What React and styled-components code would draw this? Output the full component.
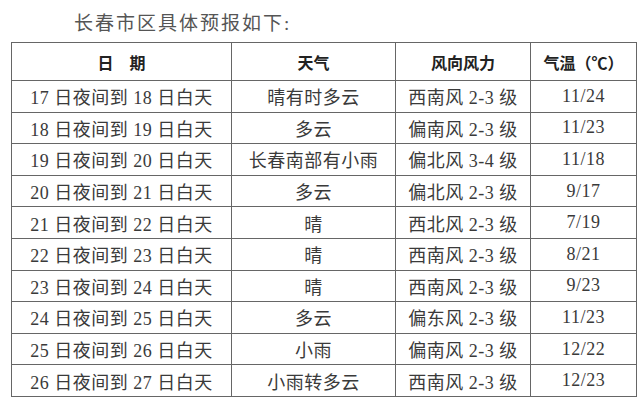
import React from "react";
import styled, { createGlobalStyle } from "styled-components";

const GlobalStyle = createGlobalStyle`
  html, body {
    margin: 0;
    padding: 0;
    background: #ffffff;
  }
  body {
    font-family: "Liberation Serif", "Noto Sans CJK SC", serif;
    color: #333;
  }
`;

const Page = styled.div`
  width: 640px;
  height: 404px;
  overflow: hidden;
  background: #fff;
`;

const Title = styled.div`
  height: 42px;
  padding-left: 74px;
  box-sizing: border-box;
  display: flex;
  align-items: center;
  font-size: 19px;
  letter-spacing: 2px;
  color: #555;
  font-family: "Liberation Serif", "Noto Sans CJK SC", serif;
`;

const Table = styled.table`
  margin-left: 11px;
  border-collapse: collapse;
  table-layout: fixed;
  width: 625px;
  border: 1.5px solid #666;
`;

const HeadCell = styled.th`
  height: 37px;
  padding: 0;
  border: 1px solid #666;
  font-size: 16px;
  font-weight: 700;
  color: #222;
  text-align: center;
  vertical-align: middle;
  font-family: "Noto Sans CJK SC", serif;
`;

const Cell = styled.td`
  height: 30.6px;
  padding: 0;
  border: 1px solid #666;
  font-size: 18px;
  letter-spacing: 0.5px;
  color: #3a3a3a;
  text-align: center;
  vertical-align: middle;
  white-space: nowrap;
`;

const columns = [
  { label: "日　期", width: 220 },
  { label: "天气", width: 164 },
  { label: "风向风力", width: 135 },
  { label: "气温（℃）", width: 106 },
];

const rows = [
  ["17 日夜间到 18 日白天", "晴有时多云", "西南风 2-3 级", "11/24"],
  ["18 日夜间到 19 日白天", "多云", "偏南风 2-3 级", "11/23"],
  ["19 日夜间到 20 日白天", "长春南部有小雨", "偏北风 3-4 级", "11/18"],
  ["20 日夜间到 21 日白天", "多云", "偏北风 2-3 级", "9/17"],
  ["21 日夜间到 22 日白天", "晴", "西北风 2-3 级", "7/19"],
  ["22 日夜间到 23 日白天", "晴", "西南风 2-3 级", "8/21"],
  ["23 日夜间到 24 日白天", "晴", "西南风 2-3 级", "9/23"],
  ["24 日夜间到 25 日白天", "多云", "偏东风 2-3 级", "11/23"],
  ["25 日夜间到 26 日白天", "小雨", "偏南风 2-3 级", "12/22"],
  ["26 日夜间到 27 日白天", "小雨转多云", "西南风 2-3 级", "12/23"],
];

export default function App() {
  return (
    <Page>
      <GlobalStyle />
      <Title>长春市区具体预报如下:</Title>
      <Table>
        <colgroup>
          {columns.map((c) => (
            <col key={c.label} style={{ width: c.width }} />
          ))}
        </colgroup>
        <thead>
          <tr>
            {columns.map((c) => (
              <HeadCell key={c.label}>{c.label}</HeadCell>
            ))}
          </tr>
        </thead>
        <tbody>
          {rows.map((r) => (
            <tr key={r[0]}>
              {r.map((v, i) => (
                <Cell key={i}>{v}</Cell>
              ))}
            </tr>
          ))}
        </tbody>
      </Table>
    </Page>
  );
}
